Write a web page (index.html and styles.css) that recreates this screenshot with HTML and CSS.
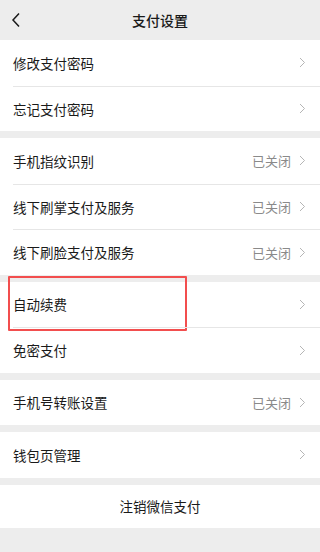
FILE: index.html
```html
<html lang="zh-CN">
<head>
<meta charset="UTF-8">
<meta name="viewport" content="width=device-width, initial-scale=1.0">
<title>支付设置</title>

<link rel="stylesheet" href="styles.css">
</head>

<body>

  <header class="top-bar">
    <span class="back-btn">
      <svg width="10" height="16" viewBox="0 0 10 16"><path d="M8 1.5 L2 8 L8 14.5" fill="none" stroke="#1a1a1a" stroke-width="1.5"/></svg>
    </span>
    <h1 class="top-title">支付设置</h1>
  </header>

  <section class="group">
    <div class="row"><span class="row-label">修改支付密码</span><span class="row-right"><svg class="arrow" viewBox="0 0 7 11"><path d="M1 1 L5.5 5.5 L1 10"/></svg></span></div>
    <div class="row"><span class="row-label">忘记支付密码</span><span class="row-right"><svg class="arrow" viewBox="0 0 7 11"><path d="M1 1 L5.5 5.5 L1 10"/></svg></span></div>
  </section>

  <section class="group">
    <div class="row"><span class="row-label">手机指纹识别</span><span class="row-right"><span class="row-state">已关闭</span><svg class="arrow" viewBox="0 0 7 11"><path d="M1 1 L5.5 5.5 L1 10"/></svg></span></div>
    <div class="row"><span class="row-label">线下刷掌支付及服务</span><span class="row-right"><span class="row-state">已关闭</span><svg class="arrow" viewBox="0 0 7 11"><path d="M1 1 L5.5 5.5 L1 10"/></svg></span></div>
    <div class="row"><span class="row-label">线下刷脸支付及服务</span><span class="row-right"><span class="row-state">已关闭</span><svg class="arrow" viewBox="0 0 7 11"><path d="M1 1 L5.5 5.5 L1 10"/></svg></span></div>
  </section>

  <section class="group">
    <div class="row marked"><span class="row-label">自动续费</span><span class="row-right"><svg class="arrow" viewBox="0 0 7 11"><path d="M1 1 L5.5 5.5 L1 10"/></svg></span><span class="mark-box"></span></div>
    <div class="row"><span class="row-label">免密支付</span><span class="row-right"><svg class="arrow" viewBox="0 0 7 11"><path d="M1 1 L5.5 5.5 L1 10"/></svg></span></div>
  </section>

  <section class="group">
    <div class="row"><span class="row-label">手机号转账设置</span><span class="row-right"><span class="row-state">已关闭</span><svg class="arrow" viewBox="0 0 7 11"><path d="M1 1 L5.5 5.5 L1 10"/></svg></span></div>
  </section>

  <section class="group">
    <div class="row"><span class="row-label">钱包页管理</span><span class="row-right"><svg class="arrow" viewBox="0 0 7 11"><path d="M1 1 L5.5 5.5 L1 10"/></svg></span></div>
  </section>

  <section class="group">
    <div class="row row-center">注销微信支付</div>
  </section>

</body>
</html>
```

FILE: styles.css
```css
:root{
  --bg: #ededed;
  --text: #1a1a1a;
  --muted: #8a8a8a;
  --line: #e6e6e6;
  --red: #f24e4e;
}

*{
  margin: 0;
  padding: 0;
  box-sizing: border-box;
  font-family: "Noto Sans CJK SC", "Noto Sans", sans-serif;
}

body {
  background-color: var(--bg);
  color: var(--text);
  width: 320px;
  min-height: 552px;
  overflow: hidden;
}

.top-bar {
  height: 40px;
  display: flex;
  align-items: center;
  justify-content: center;
  position: relative;
  background-color: var(--bg);
}

.back-btn {
  position: absolute;
  left: 11px;
  top: 12px;
  display: flex;
}

.top-title {
  font-size: 14px;
  font-weight: 500;
  color: var(--text);
}

.group {
  background-color: #fff;
  margin-bottom: 7px;
}

.row {
  height: 45.5px;
  margin-left: 13px;
  padding-right: 14px;
  display: flex;
  align-items: center;
  justify-content: space-between;
  font-size: 13.5px;
  border-top: 1px solid var(--line);
  position: relative;
}

.row:first-child {
  border-top: none;
}

.row-right {
  display: flex;
  align-items: center;
  gap: 8px;
}

.row-state {
  color: var(--muted);
  font-size: 13px;
}

.arrow {
  width: 7px;
  height: 11px;
  fill: none;
  stroke: #b5b5b5;
  stroke-width: 1;
}

.row-center {
  justify-content: center;
  margin-left: 0;
  padding-right: 0;
  height: 43px;
}

/* highlight box around one entry */
.mark-box {
  position: absolute;
  left: -5px;
  top: -6px;
  width: 179px;
  height: 55px;
  border: 2px solid var(--red);
  border-radius: 1px;
}
```
